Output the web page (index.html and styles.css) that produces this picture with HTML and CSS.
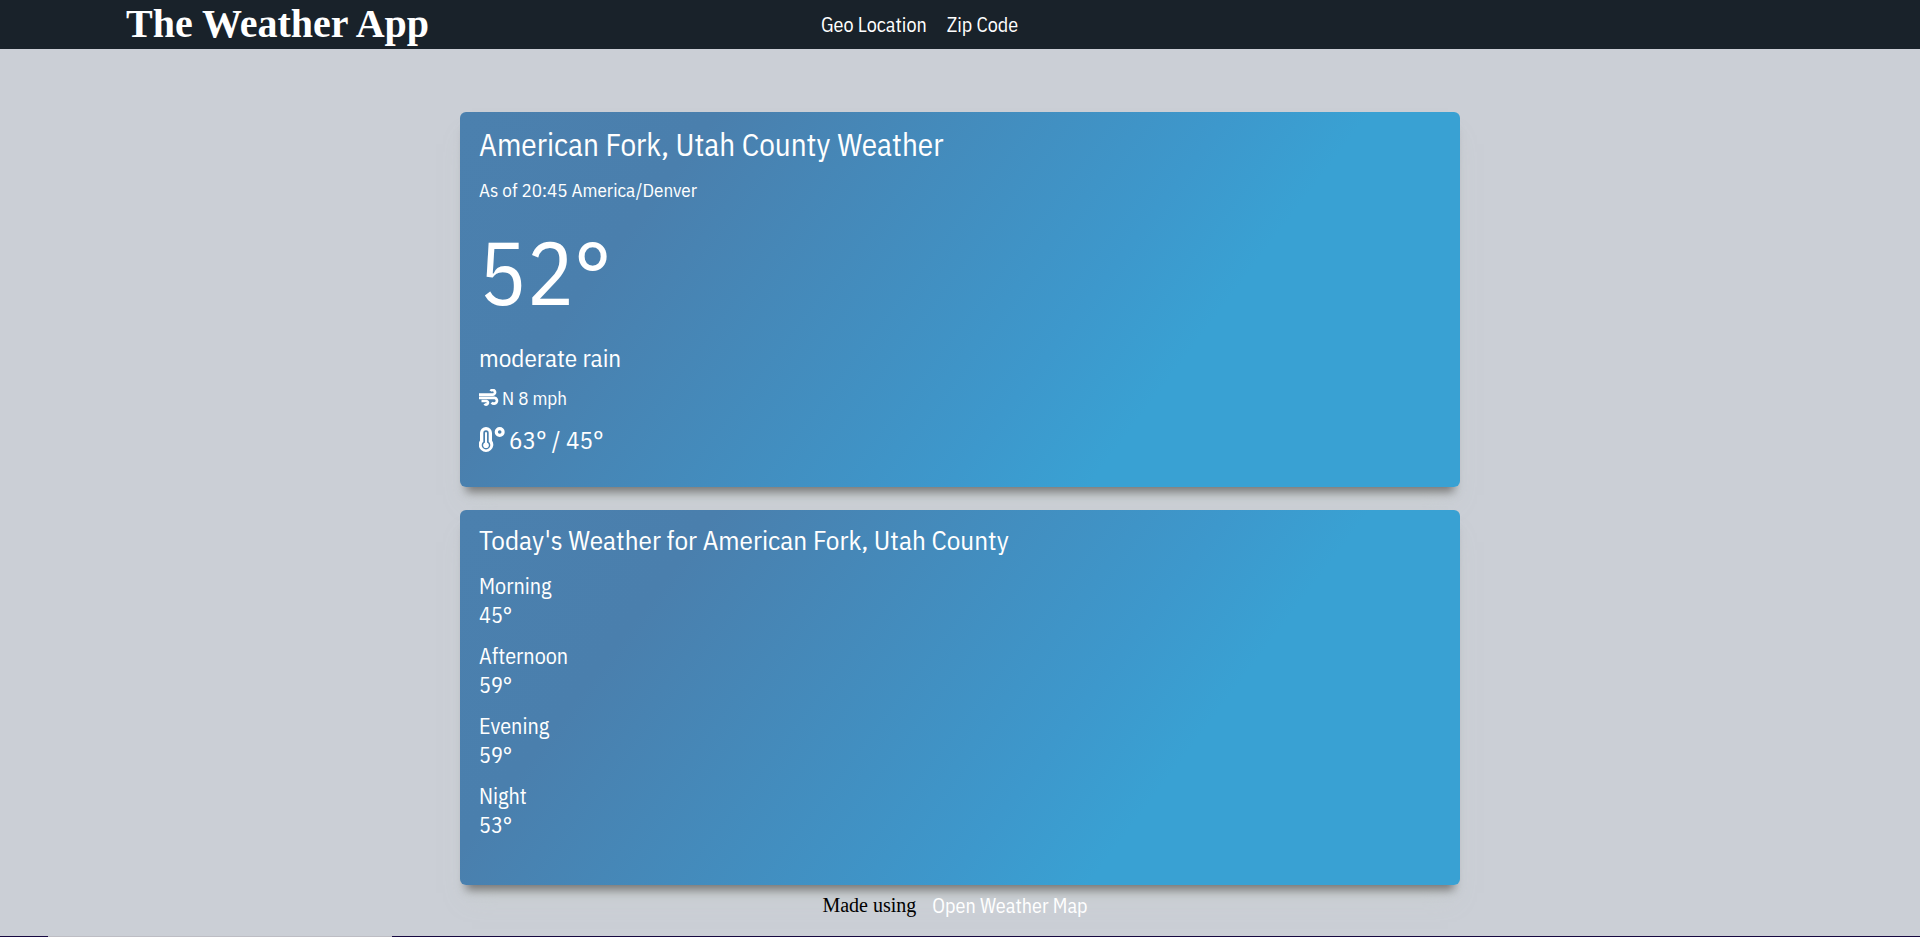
FILE: index.html
```html
<!DOCTYPE html>
<html lang="en">
<head>
<meta charset="utf-8">
<title>The Weather App</title>
<link rel="stylesheet" href="styles.css">
</head>
<body>
<header class="site-header">
  <h1 class="brand">The Weather App</h1>
  <nav class="site-nav">
    <a class="link" href="#geo">Geo Location</a>
    <a class="link" href="#zip">Zip Code</a>
  </nav>
</header>
<main class="cards">
  <section class="card current">
    <h2 class="title">American Fork, Utah County Weather</h2>
    <p class="as-of">As of 20:45 America/Denver</p>
    <p class="temperature">52°</p>
    <p class="condition">moderate rain</p>
    <p class="wind">
      <svg class="wind-icon" viewBox="0 0 20 18" aria-hidden="true">
        <g fill="none" stroke="#fff" stroke-width="2.7">
          <path d="M0 5.600H14a2.300 2.300 0 1 0-2.300-3.400"/>
          <path d="M0 8.900H15.600a2.900 2.900 0 1 1-2.900 4.500"/>
          <path d="M2.500 12H7.500a1.800 1.800 0 1 1-1.900 2.700"/>
        </g>
      </svg>
      N 8 mph
    </p>
    <p class="range">
      <svg class="temp-icon" viewBox="0 0 26 26" aria-hidden="true">
        <path fill="#fff" fill-rule="evenodd" d="M7 0a6 6 0 0 1 6 6v7.500a7.300 7.300 0 1 1-12 0V6a6 6 0 0 1 6-6zm0 3.300a2.700 2.700 0 0 0-2.700 2.700v8.800a4.300 4.300 0 1 0 5.400 0V6a2.700 2.700 0 0 0-2.700-2.700z"/>
        <path fill="#fff" d="M6 6a1 1 0 0 1 2 0v9.500a2.900 2.900 0 1 1-2 0z"/>
        <circle cx="20.700" cy="5" r="3.400" fill="none" stroke="#fff" stroke-width="3.200"/>
      </svg>
      63° / 45°
    </p>
  </section>
  <section class="card today">
    <h2 class="subtitle">Today's Weather for American Fork, Utah County</h2>
    <dl class="periods">
      <div><dt>Morning</dt><dd>45°</dd></div>
      <div><dt>Afternoon</dt><dd>59°</dd></div>
      <div><dt>Evening</dt><dd>59°</dd></div>
      <div><dt>Night</dt><dd>53°</dd></div>
    </dl>
  </section>
</main>
<footer class="site-footer">
  <span>Made using</span>
  <a class="link" href="#map">Open Weather Map</a>
</footer>
<div class="bottom-rule"></div>
</body>
</html>
```
FILE: styles.css
```css
* { box-sizing: border-box; margin: 0; }
body {
  display: flex;
  flex-direction: column;
  min-height: 100vh;
  background: #cbcfd6;
  color: #000;
  font-family: "Liberation Serif", "Times New Roman", serif;
  font-size: 20px;
}
.site-header {
  display: grid;
  grid-template-columns: 5fr 7fr;
  align-items: center;
  padding: 0 126px;
  background: #19222a;
}
.brand { padding-bottom: 1px; color: #fff; font-size: 40px; line-height: 48px; }
.site-nav { display: flex; gap: 20px; }
.link {
  color: #fff;
  font-family: "IBM Plex Sans Condensed", Roboto, sans-serif;
  font-size: 20px;
  text-decoration: none;
}
.cards {
  display: flex;
  flex-direction: column;
  gap: 23px;
  width: 100%;
  max-width: 1000px;
  margin: 63px auto 0;
}
.card {
  min-height: 375px;
  padding: 12px 19px;
  border-radius: 6px;
  background: linear-gradient(127deg, #4b80ae 0%, #4a7fad 20%, #3d98cc 60%, #39a1d3 71%);
  box-shadow: 0 11px 9px -6px #777, 0 20px 24px -12px rgba(200, 210, 200, 0.5);
  color: #fff;
  font-family: "IBM Plex Sans Condensed", Roboto, sans-serif;
}
.title { font-size: 31px; font-weight: 400; line-height: 42px; }
.as-of { margin-top: 12px; font-size: 19px; line-height: 24px; }
.temperature { margin-top: 12px; font-size: 88px; line-height: 116px; }
.condition { margin-top: 12px; font-size: 25px; line-height: 32px; }
.wind { display: flex; align-items: center; gap: 3px; margin-top: 12px; font-size: 19px; line-height: 24px; }
.range { display: flex; align-items: center; gap: 4px; margin-top: 14px; font-size: 25px; line-height: 32px; }
.wind-icon { width: 20px; height: 18px; }
.temp-icon { width: 26px; height: 26px; }
.subtitle { font-size: 27px; font-weight: 400; line-height: 36px; }
.periods { display: flex; flex-direction: column; gap: 12px; margin-top: 13px; font-size: 22px; line-height: 29px; }
.periods dd { margin: 0; }
.site-footer {
  display: flex;
  justify-content: center;
  align-items: center;
  gap: 16px;
  padding: 7px 0;
  margin-right: 10px;
}
.bottom-rule {
  height: 1px;
  margin-top: auto;
  background: linear-gradient(90deg, #160840 48px, #bdbdc4 48px 392px, #160840 392px);
}
```
